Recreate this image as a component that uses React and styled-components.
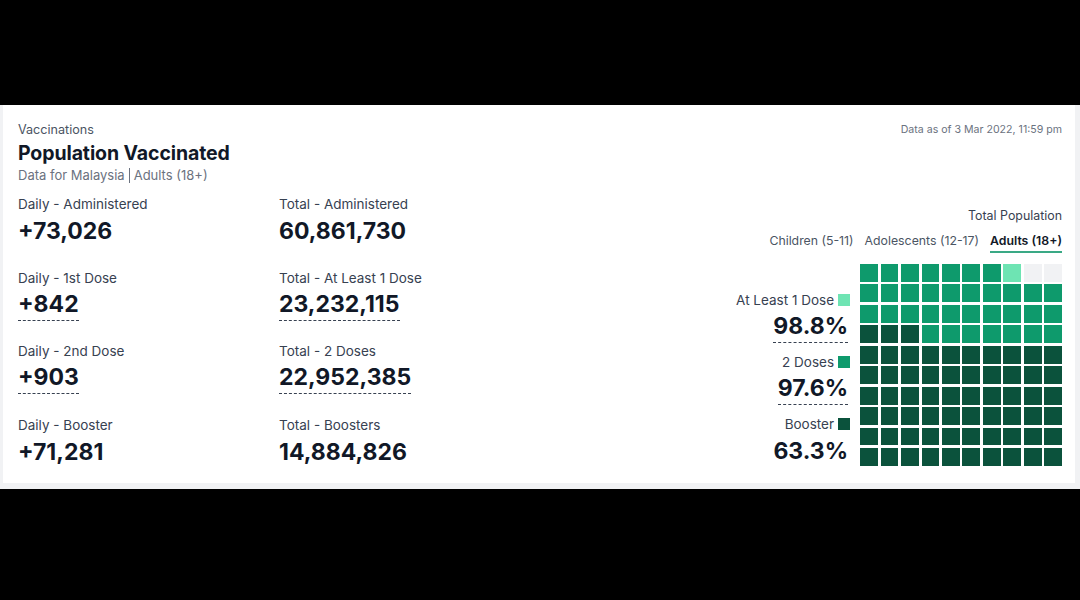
import React from "react";
import styled, { createGlobalStyle } from "styled-components";

const Global = createGlobalStyle`
  html, body { margin: 0; padding: 0; background: #000; }
  body { font-family: Inter, "Noto Sans", sans-serif; }
  * { box-sizing: border-box; }
`;

const Page = styled.div`
  width: 1080px;
  height: 600px;
  background: #000;
  padding-top: 105px;
`;

const Frame = styled.div`
  background: #f1f2f4;
  padding: 0 5px 6px 3px;
`;

const Card = styled.div`
  background: #fff;
  height: 378px;
  padding: 17px 13px 0 15px;
  display: flex;
  justify-content: space-between;
`;

const Left = styled.div`
  display: flex;
  flex-direction: column;
`;

const Eyebrow = styled.div`
  font-size: 12.6px;
  line-height: 16px;
  color: #4b5563;
`;

const Title = styled.h1`
  margin: 3px 0 0;
  font-size: 19.5px;
  line-height: 24px;
  font-weight: 700;
  color: #111827;
  letter-spacing: -0.1px;
`;

const Sub = styled.div`
  margin-top: 1px;
  font-size: 13px;
  line-height: 18px;
  color: #6b7280;
  display: flex;
  align-items: center;
`;

const Divider = styled.span`
  display: inline-block;
  width: 1px;
  height: 15px;
  background: #6b7280;
  margin: 0 4px;
`;

const Stats = styled.div`
  margin-top: 10px;
  display: grid;
  grid-template-columns: 261px 261px;
  row-gap: 20.5px;
`;

const Stat = styled.div`
  display: flex;
  flex-direction: column;
  align-items: flex-start;
`;

const Label = styled.div`
  font-size: 13.5px;
  line-height: 20px;
  color: #374151;
`;

const Value = styled.div`
  margin-top: 1px;
  font-size: 23px;
  line-height: ${(p) => (p.$dashed ? "31px" : "32px")};
  font-weight: 700;
  color: #111827;
  border-bottom: ${(p) => (p.$dashed ? "1px dashed #374151" : "none")};
`;

const Right = styled.div`
  display: flex;
  flex-direction: column;
  align-items: flex-end;
`;

const AsOf = styled.div`
  font-size: 10.6px;
  line-height: 16px;
  color: #6b7280;
`;

const TotalPop = styled.div`
  margin-top: 70px;
  font-size: 12.4px;
  line-height: 16px;
  color: #374151;
`;

const Tabs = styled.div`
  margin-top: 9px;
  display: flex;
  gap: 11px;
`;

const Tab = styled.div`
  font-size: 12.3px;
  line-height: 16px;
  padding-bottom: 2px;
  color: ${(p) => (p.$active ? "#111827" : "#4b5563")};
  font-weight: ${(p) => (p.$active ? 600 : 400)};
  border-bottom: 2px solid ${(p) => (p.$active ? "#3aa985" : "transparent")};
`;

const ChartRow = styled.div`
  margin-top: 11px;
  display: flex;
  gap: 10px;
`;

const Legend = styled.div`
  padding-top: 27px;
  display: flex;
  flex-direction: column;
  align-items: flex-end;
`;

const LegendItem = styled.div`
  display: flex;
  flex-direction: column;
  align-items: flex-end;
  height: 62px;
`;

const LegendLabel = styled.div`
  display: flex;
  align-items: center;
  gap: 4px;
  font-size: 13.5px;
  line-height: 18px;
  color: #374151;
`;

const Swatch = styled.span`
  width: 12px;
  height: 12px;
  background: ${(p) => p.$c};
`;

const Pct = styled.div`
  margin-top: 2px;
  margin-right: 2px;
  font-size: 23px;
  line-height: ${(p) => (p.$dashed ? "31px" : "32px")};
  font-weight: 700;
  color: #111827;
  border-bottom: ${(p) => (p.$dashed ? "1px dashed #374151" : "none")};
`;

const Waffle = styled.div`
  display: grid;
  grid-template-columns: repeat(10, 17.6px);
  grid-auto-rows: 17.6px;
  gap: 2.9px;
`;

const Cell = styled.div`
  background: ${(p) => p.$c};
`;

const DARK = "#0b523c";
const MID = "#0e9a6c";
const LIGHT = "#6ee4b3";
const EMPTY = "#f1f2f4";

const cells = [];
for (let r = 0; r < 10; r++) {
  for (let c = 0; c < 10; c++) {
    const k = (9 - r) * 10 + c;
    const col = k < 63 ? DARK : k < 97 ? MID : k < 98 ? LIGHT : EMPTY;
    cells.push(col);
  }
}

const stats = [
  ["Daily - Administered", "+73,026", false],
  ["Total - Administered", "60,861,730", false],
  ["Daily - 1st Dose", "+842", true],
  ["Total - At Least 1 Dose", "23,232,115", true],
  ["Daily - 2nd Dose", "+903", true],
  ["Total - 2 Doses", "22,952,385", true],
  ["Daily - Booster", "+71,281", false],
  ["Total - Boosters", "14,884,826", false],
];

const legend = [
  ["At Least 1 Dose", LIGHT, "98.8%", true],
  ["2 Doses", MID, "97.6%", true],
  ["Booster", DARK, "63.3%", false],
];

export default function App() {
  return (
    <Page>
      <Global />
      <Frame>
        <Card>
          <Left>
            <Eyebrow>Vaccinations</Eyebrow>
            <Title>Population Vaccinated</Title>
            <Sub>
              Data for Malaysia<Divider />Adults (18+)
            </Sub>
            <Stats>
              {stats.map(([l, v, d]) => (
                <Stat key={l}>
                  <Label>{l}</Label>
                  <Value $dashed={d}>{v}</Value>
                </Stat>
              ))}
            </Stats>
          </Left>
          <Right>
            <AsOf>Data as of 3 Mar 2022, 11:59 pm</AsOf>
            <TotalPop>Total Population</TotalPop>
            <Tabs>
              <Tab>Children (5-11)</Tab>
              <Tab>Adolescents (12-17)</Tab>
              <Tab $active>Adults (18+)</Tab>
            </Tabs>
            <ChartRow>
              <Legend>
                {legend.map(([l, c, p, d]) => (
                  <LegendItem key={l}>
                    <LegendLabel>
                      {l}
                      <Swatch $c={c} />
                    </LegendLabel>
                    <Pct $dashed={d}>{p}</Pct>
                  </LegendItem>
                ))}
              </Legend>
              <Waffle>
                {cells.map((c, i) => (
                  <Cell key={i} $c={c} />
                ))}
              </Waffle>
            </ChartRow>
          </Right>
        </Card>
      </Frame>
    </Page>
  );
}
